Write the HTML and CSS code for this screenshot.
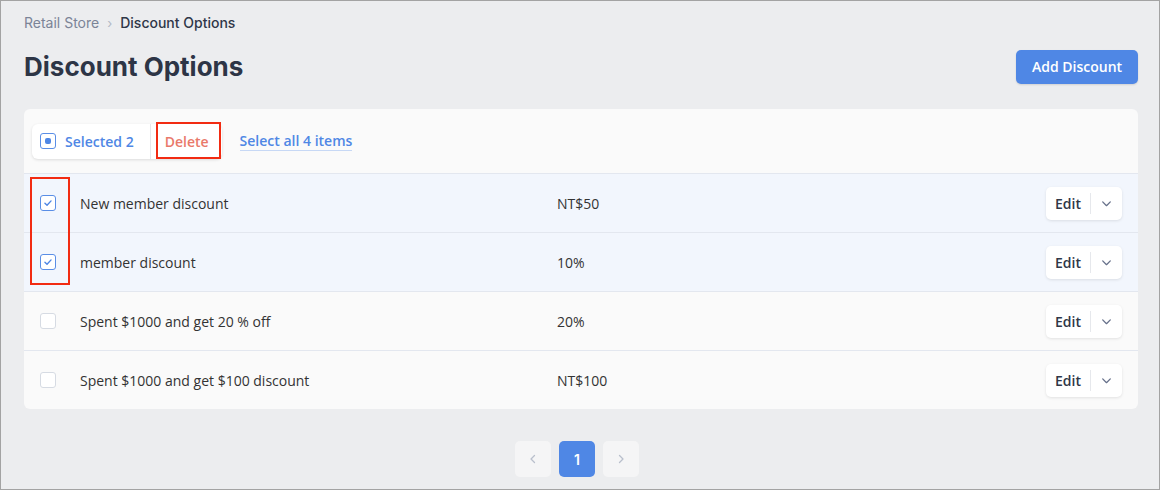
FILE: index.html
```html
<!DOCTYPE html>
<html lang="en">
<head>
  <meta charset="UTF-8">
  <title>Discount Options</title>
  <link rel="stylesheet" href="styles.css">
</head>
<body>
  <div class="frame">
    <nav class="crumbs">
      <span class="crumb-link">Retail Store</span>
      <span class="crumb-sep">&rsaquo;</span>
      <span class="crumb-current">Discount Options</span>
    </nav>

    <div class="page-head">
      <h1 class="page-title">Discount Options</h1>
      <a href="#" class="btn-primary">Add Discount</a>
    </div>

    <div class="card">
      <div class="toolbar">
        <div class="bulk">
          <span class="bulk-select">
            <span class="check check-mixed"></span>
            Selected 2
          </span>
          <span class="bulk-delete">Delete<span class="mark mark-delete"></span></span>
        </div>
        <a href="#" class="select-all">Select all 4 items</a>
      </div>

      <div class="rows">
        <span class="mark mark-checks"></span>

        <div class="row selected">
          <div class="cell-check"><span class="check check-on"><svg viewBox="0 0 16 16"><path d="M4.5 8.2l2.4 2.4 4.6-5"/></svg></span></div>
          <div class="cell-name">New member discount</div>
          <div class="cell-value">NT$50</div>
          <div class="cell-action"><span class="split"><span class="split-main">Edit</span><span class="split-arrow"><svg viewBox="0 0 12 12"><path d="M2.5 4.5L6 8l3.5-3.5"/></svg></span></span></div>
        </div>

        <div class="row selected">
          <div class="cell-check"><span class="check check-on"><svg viewBox="0 0 16 16"><path d="M4.5 8.2l2.4 2.4 4.6-5"/></svg></span></div>
          <div class="cell-name">member discount</div>
          <div class="cell-value">10%</div>
          <div class="cell-action"><span class="split"><span class="split-main">Edit</span><span class="split-arrow"><svg viewBox="0 0 12 12"><path d="M2.5 4.5L6 8l3.5-3.5"/></svg></span></span></div>
        </div>

        <div class="row">
          <div class="cell-check"><span class="check"></span></div>
          <div class="cell-name">Spent $1000 and get 20 % off</div>
          <div class="cell-value">20%</div>
          <div class="cell-action"><span class="split"><span class="split-main">Edit</span><span class="split-arrow"><svg viewBox="0 0 12 12"><path d="M2.5 4.5L6 8l3.5-3.5"/></svg></span></span></div>
        </div>

        <div class="row">
          <div class="cell-check"><span class="check"></span></div>
          <div class="cell-name">Spent $1000 and get $100 discount</div>
          <div class="cell-value">NT$100</div>
          <div class="cell-action"><span class="split"><span class="split-main">Edit</span><span class="split-arrow"><svg viewBox="0 0 12 12"><path d="M2.5 4.5L6 8l3.5-3.5"/></svg></span></span></div>
        </div>
      </div>
    </div>

    <div class="pager">
      <span class="page-btn page-nav"><svg viewBox="0 0 12 12"><path d="M7.5 2.5L4 6l3.5 3.5"/></svg></span>
      <span class="page-btn page-on">1</span>
      <span class="page-btn page-nav"><svg viewBox="0 0 12 12"><path d="M4.5 2.5L8 6l-3.5 3.5"/></svg></span>
    </div>
  </div>
</body>
</html>
```

FILE: styles.css
```css
body {
  margin: 0;
  font-family: "Open Sans", Arial, sans-serif;
  background: #fff;
}

.frame {
  width: 1160px;
  height: 490px;
  box-sizing: border-box;
  border: 1px solid #a3a3a3;
  background: #ecedef;
  padding: 14px 21px 0 23px;
}

.crumbs {
  display: flex;
  align-items: center;
  gap: 8px;
  font-family: Inter, sans-serif;
  font-size: 14px;
  line-height: 16px;
}

.crumb-link {
  color: #7b8497;
}

.crumb-sep {
  color: #b3b9c5;
  font-size: 13px;
}

.crumb-current {
  color: #2f3748;
  font-weight: 500;
}

.page-head {
  display: flex;
  justify-content: space-between;
  align-items: center;
  margin-top: 18px;
}

.page-title {
  margin: 0;
  font-family: Inter, sans-serif;
  font-size: 26px;
  line-height: 36px;
  font-weight: 700;
  color: #2d3546;
}

.btn-primary {
  display: block;
  width: 122px;
  height: 34px;
  line-height: 34px;
  text-align: center;
  background: #4f87e5;
  color: #fff;
  font-size: 14px;
  font-weight: 600;
  border-radius: 5px;
  text-decoration: none;
  box-shadow: 0 1px 2px rgba(0,0,0,0.12);
}

.card {
  margin-top: 24px;
  background: #fafafa;
  border-radius: 6px;
  overflow: hidden;
}

.toolbar {
  display: flex;
  align-items: center;
  height: 65px;
  padding: 0 8px;
  border-bottom: 1px solid #e3e7ef;
  box-sizing: border-box;
  gap: 18px;
}

.bulk {
  display: flex;
  align-items: center;
  height: 35px;
  background: #fff;
  border-radius: 6px;
  box-shadow: 0 1px 3px rgba(0,0,0,0.12);
  font-size: 14px;
  font-weight: 600;
}

.bulk-select {
  display: flex;
  align-items: center;
  gap: 9px;
  padding: 0 16px 0 8px;
  color: #4f87e5;
  height: 100%;
  border-right: 1px solid #e6e8ec;
  box-sizing: border-box;
}

.bulk-delete {
  position: relative;
  padding: 0 13px 0 14px;
  color: #e9796a;
}

.select-all {
  color: #4f87e5;
  font-size: 14px;
  font-weight: 600;
  text-decoration: none;
  border-bottom: 1px solid #c7d8f5;
  line-height: 18px;
}

.mark {
  position: absolute;
  border: 2px solid #f22b12;
  box-sizing: border-box;
}

.mark-delete {
  left: 5px;
  right: 1px;
  top: -10px;
  height: 37px;
}

.rows {
  position: relative;
}

.mark-checks {
  left: 6px;
  top: 3px;
  width: 40px;
  height: 108px;
  z-index: 2;
}

.row {
  display: grid;
  grid-template-columns: 56px 477px 1fr auto;
  align-items: center;
  height: 59px;
  padding-right: 16px;
  border-bottom: 1px solid #e3e7ef;
  box-sizing: border-box;
  font-size: 14px;
  color: #333;
}

.row:last-child {
  border-bottom: 0;
  height: 58px;
}

.row.selected {
  background: #f2f6fd;
}

.cell-check {
  padding-left: 16px;
  display: flex;
}

.check {
  display: inline-flex;
  align-items: center;
  justify-content: center;
  width: 16px;
  height: 16px;
  box-sizing: border-box;
  border: 1px solid #d6dbe3;
  border-radius: 3px;
  background: #fff;
}

.check-on,
.check-mixed {
  border: 1.5px solid #5a8ee6;
}

.check-mixed::after {
  content: "";
  width: 6px;
  height: 6px;
  border-radius: 2px;
  background: #4f87e5;
}

.check svg {
  width: 14px;
  height: 14px;
  fill: none;
  stroke: #4f87e5;
  stroke-width: 1.6;
  stroke-linecap: round;
  stroke-linejoin: round;
}

.split {
  display: flex;
  align-items: center;
  height: 33px;
  background: #fff;
  border-radius: 5px;
  box-shadow: 0 1px 3px rgba(0,0,0,0.1);
}

.split-main {
  padding: 0 9px;
  font-weight: 600;
  color: #2f3748;
  border-right: 1px solid #e6e8ec;
  line-height: 21px;
}

.split-arrow {
  display: flex;
  width: 31px;
  justify-content: center;
}

.split-arrow svg {
  width: 13px;
  height: 13px;
  fill: none;
  stroke: #66708a;
  stroke-width: 1.2;
  stroke-linecap: round;
  stroke-linejoin: round;
}

.pager {
  display: flex;
  justify-content: center;
  gap: 8px;
  margin-top: 32px;
  padding-right: 8px;
}

.page-btn {
  display: flex;
  align-items: center;
  justify-content: center;
  width: 36px;
  height: 36px;
  border-radius: 5px;
  font-family: Inter, sans-serif;
  font-size: 14px;
  font-weight: 600;
}

.page-nav {
  background: #f5f5f6;
}

.page-nav svg {
  width: 12px;
  height: 12px;
  fill: none;
  stroke: #b9bfcc;
  stroke-width: 1.3;
  stroke-linecap: round;
  stroke-linejoin: round;
}

.page-on {
  background: #4f87e5;
  color: #fff;
}
```
